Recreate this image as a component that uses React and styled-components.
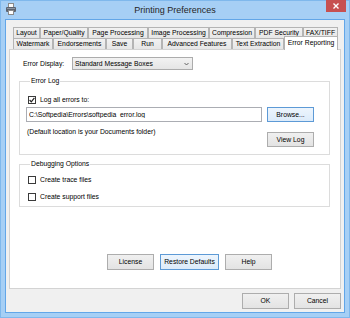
import React from "react";
import styled, { createGlobalStyle } from "styled-components";

const GlobalStyle = createGlobalStyle`
  html, body {
    margin: 0;
    padding: 0;
  }
  body {
    width: 350px;
    height: 318px;
    overflow: hidden;
    font-family: "Liberation Sans", Arial, sans-serif;
    font-size: 6.8px;
    color: #000;
  }
  * {
    box-sizing: border-box;
  }
`;

// Window frame
const Window = styled.div`
  width: 350px;
  height: 318px;
  background: #a6cff5;
  border: 1px solid #7fb8ec;
  display: flex;
  flex-direction: column;
`;

const TitleBar = styled.div`
  height: 18px;
  display: grid;
  grid-template-columns: 1fr auto 1fr;
  align-items: start;
`;

const IconSlot = styled.div`
  padding: 2px 0 0 5px;
  line-height: 0;
`;

const Title = styled.div`
  font-size: 9px;
  line-height: 12px;
  padding-top: 3px;
  color: #262626;
`;

const CloseButton = styled.div`
  justify-self: end;
  width: 20px;
  height: 12px;
  margin: -1px 3px 0 0;
  background: #c75050;
  display: flex;
  align-items: center;
  justify-content: center;
`;

const Body = styled.div`
  flex: 1;
  margin: 0 4px 4px;
  background: #f0f0f0;
  border: 1px solid #62a6e8;
  padding: 7px 3px 3px;
  display: flex;
  flex-direction: column;
`;

// Tabs
const TabStrip = styled.div`
  margin-left: 4px;
`;

const TabRow = styled.div`
  display: flex;
  height: 11px;
`;

const Tab = styled.div`
  flex: none;
  width: ${(p) => p.$w}px;
  height: ${(p) => (p.$active ? 14 : 11)}px;
  margin-top: ${(p) => (p.$active ? -2 : 0)}px;
  margin-bottom: ${(p) => (p.$active ? -1 : 0)}px;
  position: relative;
  z-index: ${(p) => (p.$active ? 1 : 0)};
  border: 1px solid #b4b4b4;
  border-bottom: none;
  background: ${(p) => (p.$active ? "#fff" : "linear-gradient(#f2f2f2, #e6e6e6)")};
  display: flex;
  align-items: ${(p) => (p.$active ? "flex-start" : "center")};
  padding-top: ${(p) => (p.$active ? 2 : 0)}px;
  justify-content: center;
  line-height: 8px;
  white-space: nowrap;
`;

const Panel = styled.div`
  flex: 1;
  background: #fff;
  border: 1px solid #d3d3d3;
  display: flex;
  flex-direction: column;
`;

// Error display row
const DisplayRow = styled.div`
  margin-top: 7px;
  padding-left: 13px;
  height: 13px;
  display: flex;
  align-items: center;
`;

const FieldLabel = styled.span`
  width: 49px;
  line-height: 8px;
`;

const Select = styled.div`
  width: 121px;
  height: 13px;
  border: 1px solid #acacac;
  background: linear-gradient(#f2f2f2, #e5e5e5);
  display: flex;
  align-items: center;
  justify-content: space-between;
  padding: 0 3px 0 2px;
  line-height: 8px;
`;

// Group boxes
const Group = styled.fieldset`
  margin: ${(p) => p.$top}px 10px 0 9px;
  border: 1px solid #dcdcdc;
  padding: ${(p) => p.$pt}px 15px ${(p) => p.$pb}px 6px;
  min-width: 0;
`;

const Legend = styled.legend`
  padding: 0 1px;
  margin-left: 4px;
  line-height: 8px;
`;

const CheckRow = styled.label`
  display: flex;
  align-items: center;
  height: 9px;
  margin-left: 2px;
  margin-top: ${(p) => p.$mt || 0}px;
  line-height: 8px;
`;

const Box = styled.span`
  width: 8px;
  height: 8px;
  border: 1px solid #3a3a3a;
  background: #fff;
  margin-right: 4px;
  display: flex;
  align-items: center;
  justify-content: center;
`;

const PathRow = styled.div`
  display: flex;
  gap: 5px;
  margin-top: 3px;
  height: 15px;
`;

const PathInput = styled.input`
  flex: 1;
  min-width: 0;
  height: 15px;
  border: 1px solid #abadb3;
  padding: 0 2px;
  font: inherit;
  line-height: 11px;
  color: #000;
  background: #fff;
  outline: none;
`;

const InfoRow = styled.div`
  display: flex;
  align-items: flex-start;
  justify-content: space-between;
  margin-top: 6px;
`;

const Hint = styled.span`
  line-height: 8px;
  padding-left: 1px;
`;

const Button = styled.button`
  width: ${(p) => p.$w || 47}px;
  height: ${(p) => p.$h || 16}px;
  margin-top: ${(p) => p.$mt || 0}px;
  flex: none;
  padding: 0;
  font: inherit;
  color: #000;
  border: 1px solid ${(p) => (p.$focus ? "#5d9ad6" : "#adadad")};
  background: ${(p) =>
    p.$focus ? "linear-gradient(#edf5fd, #dcebfa)" : "linear-gradient(#f0f0f0, #e3e3e3)"};
  border-radius: 0;
  line-height: 8px;
`;

const ButtonRow = styled.div`
  margin-top: auto;
  margin-bottom: 18px;
  padding-left: 29px;
  display: flex;
  justify-content: center;
  gap: 6px;
`;

const DialogButtons = styled.div`
  display: flex;
  justify-content: flex-end;
  gap: 5px;
  margin-top: 4px;
`;

const rowOne = [
  ["Layout", 27],
  ["Paper/Quality", 48],
  ["Page Processing", 60],
  ["Image Processing", 61],
  ["Compression", 46],
  ["PDF Security", 48],
  ["FAX/TIFF", 35],
];

const rowTwo = [
  ["Watermark", 40],
  ["Endorsements", 53],
  ["Save", 27],
  ["Run", 29],
  ["Advanced Features", 70],
  ["Text Extraction", 52],
  ["Error Reporting", 54],
];

const logPath = "C:\\Softpedia\\Errors\\softpedia_error.log";

const PrinterIcon = () => (
  <svg width="10" height="12" viewBox="0 0 10 12">
    <rect x="2.5" y="0.5" width="5" height="4" fill="#fafafa" stroke="#8a8a8a" />
    <rect x="0" y="4" width="10" height="5" rx="1" fill="#5c6470" />
    <rect x="1" y="5" width="8" height="1" fill="#8d96a3" />
    <rect x="2.5" y="7.5" width="5" height="4" fill="#fff" stroke="#8a8a8a" />
  </svg>
);

const CloseIcon = () => (
  <svg width="6" height="6" viewBox="0 0 6 6">
    <path d="M0.5 0.5 L5.5 5.5 M5.5 0.5 L0.5 5.5" stroke="#fff" strokeWidth="1.4" />
  </svg>
);

const Chevron = () => (
  <svg width="5" height="4" viewBox="0 0 5 4">
    <path d="M0.5 1 L2.5 3 L4.5 1" fill="none" stroke="#555" strokeWidth="0.9" />
  </svg>
);

const Check = () => (
  <svg width="6" height="6" viewBox="0 0 6 6">
    <path d="M0.6 3 L2.3 4.8 L5.4 0.8" fill="none" stroke="#222" strokeWidth="1.2" />
  </svg>
);

const App = () => {
  return (
    <>
      <GlobalStyle />
      <Window>
        <TitleBar>
          <IconSlot>
            <PrinterIcon />
          </IconSlot>
          <Title>Printing Preferences</Title>
          <CloseButton>
            <CloseIcon />
          </CloseButton>
        </TitleBar>

        <Body>
          <TabStrip>
            <TabRow>
              {rowOne.map(([name, w]) => (
                <Tab key={name} $w={w}>
                  {name}
                </Tab>
              ))}
            </TabRow>
            <TabRow>
              {rowTwo.map(([name, w]) => (
                <Tab key={name} $w={w} $active={name === "Error Reporting"}>
                  {name}
                </Tab>
              ))}
            </TabRow>
          </TabStrip>

          <Panel>
            <DisplayRow>
              <FieldLabel>Error Display:</FieldLabel>
              <Select>
                <span>Standard Message Boxes</span>
                <Chevron />
              </Select>
            </DisplayRow>

            <Group $top={7} $pt={10} $pb={7}>
              <Legend>Error Log</Legend>
              <CheckRow>
                <Box>
                  <Check />
                </Box>
                Log all errors to:
              </CheckRow>
              <PathRow>
                <PathInput readOnly defaultValue={logPath} />
                <Button $h={15} $focus>
                  Browse...
                </Button>
              </PathRow>
              <InfoRow>
                <Hint>(Default location is your Documents folder)</Hint>
                <Button $h={15} $mt={4}>
                  View Log
                </Button>
              </InfoRow>
            </Group>

            <Group $top={5} $pt={7} $pb={5}>
              <Legend>Debugging Options</Legend>
              <CheckRow>
                <Box />
                Create trace files
              </CheckRow>
              <CheckRow $mt={8}>
                <Box />
                Create support files
              </CheckRow>
            </Group>

            <ButtonRow>
              <Button>License</Button>
              <Button $w={59} $focus>
                Restore Defaults
              </Button>
              <Button>Help</Button>
            </ButtonRow>
          </Panel>

          <DialogButtons>
            <Button>OK</Button>
            <Button>Cancel</Button>
          </DialogButtons>
        </Body>
      </Window>
    </>
  );
};

export default App;
